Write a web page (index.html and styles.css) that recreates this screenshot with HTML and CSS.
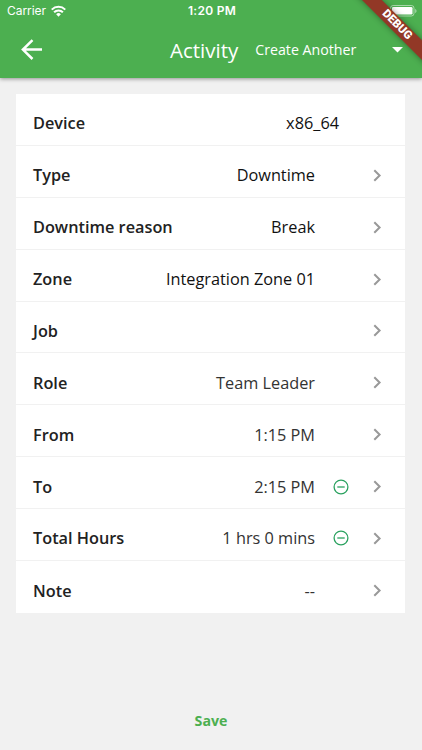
FILE: index.html
```html
<!DOCTYPE html>
<html lang="en">
<head>
  <meta charset="UTF-8" />
  <meta name="viewport" content="width=device-width, initial-scale=1.0"/>
  <title>Activity</title>
  <link rel="stylesheet" href="styles.css">
</head>
<body>
  <header class="header">
    <div class="status-bar">
      <div class="carrier">
        <span>Carrier</span>
        <svg class="wifi" viewBox="0 0 14 11" width="15" height="12">
          <path d="M.7 4.200a9 9 0 0 1 12.600 0M2.900 6.700a5.800 5.800 0 0 1 8.200 0" fill="none" stroke="#fff" stroke-width="1.900"/>
          <path d="M4.800 8.500a3.200 3.200 0 0 1 4.400 0L7 10.800z" fill="#fff"/>
        </svg>
      </div>
      <span class="time">1:20 PM</span>
      <svg class="battery" viewBox="0 0 27 12" width="27" height="12">
        <rect x="0.5" y="0.5" width="23.5" height="10.5" rx="2.6" fill="none" stroke="#fff" stroke-opacity="0.5"/>
        <rect x="2" y="2" width="20.5" height="7.5" rx="1.3" fill="#fff"/>
        <path d="M25.200 4v4c.8-.4 1.300-1.100 1.300-2s-.5-1.600-1.300-2z" fill="#fff" fill-opacity="0.5"/>
      </svg>
    </div>
    <div class="toolbar">
      <svg class="back" viewBox="0 0 22 22" width="22" height="22">
        <path d="M11.500 1.200L1.900 10.600l9.600 9.400M2 10.600h19" fill="none" stroke="#fff" stroke-width="2.500"/>
      </svg>
      <h1>Activity</h1>
      <span class="mode">Create Another</span>
      <svg class="caret" viewBox="0 0 11 6" width="11" height="6"><path d="M0 0h11L5.500 5.500z" fill="#fff"/></svg>
    </div>
  </header>
  <div class="debug">DEBUG</div>

  <svg class="defs" width="0" height="0">
    <symbol id="chevron" viewBox="0 0 9 13">
      <path d="M1.300 1.200l5.300 5.300-5.300 5.300" fill="none" stroke="#999" stroke-width="2"/>
    </symbol>
    <symbol id="minus" viewBox="0 0 16 16">
      <circle cx="8" cy="8" r="6.900" fill="none" stroke="#2aa15f" stroke-width="1.300"/>
      <path d="M4.300 8h7.400" stroke="#2aa15f" stroke-width="1.300"/>
    </symbol>
  </svg>

  <main class="card">
    <div class="row device">
      <span class="label">Device</span>
      <span class="value">x86_64</span>
    </div>
    <div class="row">
      <span class="label">Type</span>
      <span class="value">Downtime</span>
      <svg class="chevron"><use href="#chevron"/></svg>
    </div>
    <div class="row">
      <span class="label">Downtime reason</span>
      <span class="value">Break</span>
      <svg class="chevron"><use href="#chevron"/></svg>
    </div>
    <div class="row">
      <span class="label">Zone</span>
      <span class="value">Integration Zone 01</span>
      <svg class="chevron"><use href="#chevron"/></svg>
    </div>
    <div class="row">
      <span class="label">Job</span>
      <span class="value"></span>
      <svg class="chevron"><use href="#chevron"/></svg>
    </div>
    <div class="row">
      <span class="label">Role</span>
      <span class="value soft">Team Leader</span>
      <svg class="chevron"><use href="#chevron"/></svg>
    </div>
    <div class="row">
      <span class="label">From</span>
      <span class="value soft">1:15 PM</span>
      <svg class="chevron"><use href="#chevron"/></svg>
    </div>
    <div class="row">
      <span class="label">To</span>
      <span class="value soft">2:15 PM</span>
      <svg class="minus"><use href="#minus"/></svg>
      <svg class="chevron"><use href="#chevron"/></svg>
    </div>
    <div class="row">
      <span class="label">Total Hours</span>
      <span class="value soft">1 hrs 0 mins</span>
      <svg class="minus"><use href="#minus"/></svg>
      <svg class="chevron"><use href="#chevron"/></svg>
    </div>
    <div class="row">
      <span class="label">Note</span>
      <span class="value soft">--</span>
      <svg class="chevron"><use href="#chevron"/></svg>
    </div>
  </main>

  <button class="save">Save</button>
</body>
</html>
```
FILE: styles.css
```css
* {
  box-sizing: border-box;
}

body {
  margin: 0;
  height: 750px;
  position: relative;
  overflow: hidden;
  display: flex;
  flex-direction: column;
  font-family: "Open Sans", sans-serif;
  background-color: #f1f1f1;
  color: #222;
}

.header {
  height: 78px;
  background-color: #4caf50;
  color: white;
  box-shadow: 0 1px 4px rgba(0, 0, 0, 0.4);
}

.status-bar {
  display: grid;
  grid-template-columns: 1fr auto 1fr;
  align-items: center;
  height: 21px;
  padding: 0 5px 0 7px;
  font-family: Inter, sans-serif;
  font-size: 12px;
}

.carrier {
  display: flex;
  align-items: center;
  gap: 5px;
  letter-spacing: -0.05px;
}

.time {
  font-weight: 600;
  letter-spacing: 0.3px;
}

.battery {
  justify-self: end;
}

.toolbar {
  display: flex;
  align-items: center;
  height: 57px;
  padding: 0 19px 0 21px;
}

.toolbar h1 {
  margin: 0 0 0 127px;
  font-size: 20.5px;
  font-weight: 400;
}

.mode {
  margin-left: 17px;
  font-size: 14.2px;
}

.caret {
  margin-left: auto;
}

/* corner ribbon */
.debug {
  position: absolute;
  top: 18px;
  right: -30px;
  width: 110px;
  height: 13.5px;
  transform: rotate(45deg);
  background-color: #923826;
  box-shadow: 0 0 6px rgba(0, 0, 0, 0.4);
  color: white;
  font-family: Roboto, sans-serif;
  font-size: 11.5px;
  font-weight: 900;
  line-height: 13.5px;
  text-align: center;
}

.defs {
  position: absolute;
}

.card {
  margin: 16px 17px 0 16px;
  background-color: white;
}

.row {
  display: flex;
  align-items: center;
  height: 51.88px;
  padding: 8px 23px 0 17px;
  border-bottom: 1px solid #f1f1f1;
  font-size: 16.3px;
}

.row:last-child {
  border-bottom: none;
}

.label {
  font-weight: 600;
}

.value {
  margin-left: auto;
  margin-right: 58px;
  color: #111;
}

.value.soft {
  color: #333;
}

.device .value {
  margin-right: 43px;
}

.value:has(+ .minus) {
  margin-right: 18px;
}

.chevron {
  width: 9px;
  height: 13px;
}

.minus {
  width: 16px;
  height: 16px;
  margin-right: 24px;
}

.save {
  align-self: center;
  margin: 98px 0 0;
  padding: 0;
  border: none;
  background: none;
  color: #4caf50;
  font-family: inherit;
  font-size: 14.2px;
  font-weight: 700;
}
```
